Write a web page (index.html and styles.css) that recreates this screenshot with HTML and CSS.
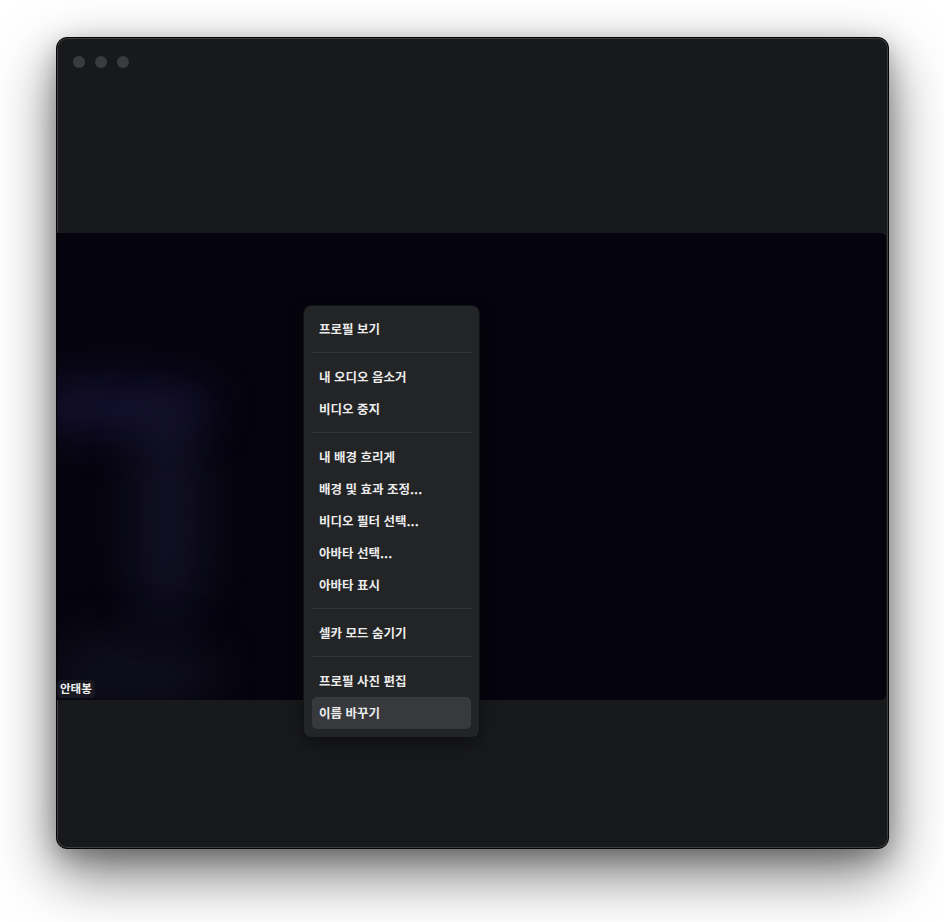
FILE: index.html
```html
<!DOCTYPE html>
<html lang="ko">
<head>
<meta charset="utf-8">
<title>Video</title>
<link rel="stylesheet" href="styles.css">
</head>
<body>
<div class="stage">
  <div class="window">
    <div class="titlebar">
      <span class="light"></span>
      <span class="light"></span>
      <span class="light"></span>
    </div>
    <div class="video">
      <div class="blob blob-a"></div>
      <div class="blob blob-b"></div>
      <div class="blob blob-c"></div>
      <span class="name">안태봉</span>
    </div>
    <div class="footer"></div>

    <div class="menu">
      <div class="item">프로필 보기</div>
      <div class="sep"></div>
      <div class="item">내 오디오 음소거</div>
      <div class="item">비디오 중지</div>
      <div class="sep"></div>
      <div class="item">내 배경 흐리게</div>
      <div class="item">배경 및 효과 조정...</div>
      <div class="item">비디오 필터 선택...</div>
      <div class="item">아바타 선택...</div>
      <div class="item">아바타 표시</div>
      <div class="sep"></div>
      <div class="item">셀카 모드 숨기기</div>
      <div class="sep"></div>
      <div class="item">프로필 사진 편집</div>
      <div class="item active">이름 바꾸기</div>
    </div>
  </div>
</div>
</body>
</html>
```

FILE: styles.css
```css
* { box-sizing: border-box; }

html, body {
  margin: 0;
  padding: 0;
  background: #ffffff;
  width: 944px;
  height: 922px;
  overflow: hidden;
  font-family: "Noto Sans CJK KR", "Noto Sans", sans-serif;
}

.stage {
  padding: 37px 0 0 56px;
}

.window {
  position: relative;
  width: 833px;
  height: 812px;
  background: #18191b;
  border: 1px solid #050505;
  border-radius: 11px;
  box-shadow:
    inset 0 0 0 1px rgba(255, 255, 255, 0.16),
    0 24px 60px rgba(0, 0, 0, 0.55),
    0 8px 24px rgba(0, 0, 0, 0.25);
  display: flex;
  flex-direction: column;
}

.titlebar {
  height: 195px;
  display: flex;
  align-items: flex-start;
  gap: 10px;
  padding: 18px 0 0 16px;
}

.light {
  width: 12px;
  height: 12px;
  border-radius: 50%;
  background: #3a3b3e;
}

.video {
  position: relative;
  height: 467px;
  margin-right: 2px;
  background: #05040e;
  border-radius: 0 5px 5px 0;
  overflow: hidden;
}

.blob {
  position: absolute;
  filter: blur(22px);
}

.blob-a {
  left: -30px;
  top: 150px;
  width: 185px;
  height: 48px;
  border-radius: 40%;
  background: rgba(34, 30, 78, 0.55);
}

.blob-b {
  left: 75px;
  top: 175px;
  width: 70px;
  height: 210px;
  border-radius: 40%;
  background: rgba(28, 26, 52, 0.55);
}

.blob-c {
  left: -10px;
  top: 400px;
  width: 170px;
  height: 80px;
  border-radius: 50%;
  background: rgba(24, 22, 40, 0.5);
}

.name {
  position: absolute;
  left: 0;
  bottom: 2px;
  padding: 1px 3px 2px;
  font-size: 11.5px;
  font-weight: 700;
  line-height: 15px;
  color: #f2f2f2;
  background: rgba(30, 30, 36, 0.75);
  border-radius: 4px;
}

.footer {
  flex: 1;
}

.menu {
  position: absolute;
  left: 246px;
  top: 267px;
  width: 177px;
  padding: 7px 8px 8px;
  background: #232426;
  border: 1px solid #111214;
  border-radius: 8px;
  box-shadow: 0 6px 18px rgba(0, 0, 0, 0.4);
}

.item {
  height: 32px;
  line-height: 32px;
  padding-left: 7px;
  font-size: 12.5px;
  font-weight: 700;
  color: #ececec;
  border-radius: 5px;
  white-space: nowrap;
}

.item.active {
  background: #38393d;
}

.sep {
  height: 1px;
  margin: 7px 0 8px;
  background: #333437;
}
```
